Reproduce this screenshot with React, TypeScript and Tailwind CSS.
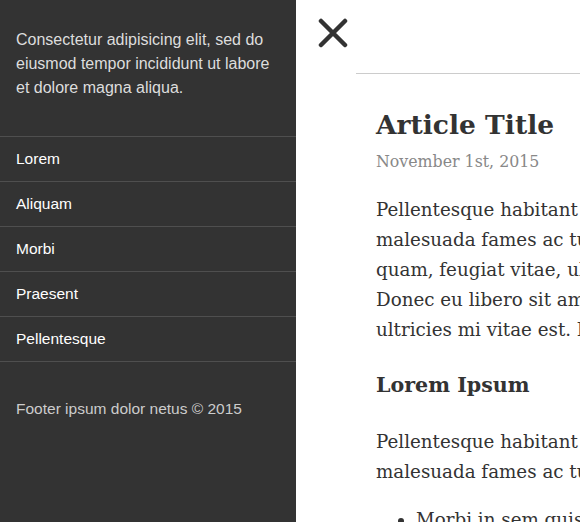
import React from 'react';

const navItems = ['Lorem', 'Aliquam', 'Morbi', 'Praesent', 'Pellentesque'];

const sans = "font-['Helvetica_Neue','Liberation_Sans',Arial,sans-serif]";
const serif = "font-['DejaVu_Serif','Liberation_Serif',serif]";

function CloseIcon() {
  return (
    <svg width="30" height="30" viewBox="0 0 30 30" className="text-[#333]">
      <path d="M3 3 L27 27 M27 3 L3 27" stroke="currentColor" strokeWidth="4.5" strokeLinecap="round" />
    </svg>
  );
}

export default function App() {
  return (
    <div className="flex h-[522px] w-[580px] overflow-hidden bg-white">
      {/* Sidebar */}
      <aside className={`${sans} flex w-[296px] shrink-0 flex-col bg-[#333333] text-[15.5px]`}>
        <p className="px-4 pt-[28px] pb-[36px] text-[16px] leading-6 text-[#dddddd]">
          Consectetur adipisicing elit, sed do eiusmod tempor incididunt ut labore et dolore magna aliqua.
        </p>
        <nav className="border-t border-[#4f4f4f]">
          {navItems.map((item) => (
            <div key={item} className="flex h-[45px] items-center border-b border-[#4f4f4f] px-4 text-white">
              {item}
            </div>
          ))}
        </nav>
        <p className="px-4 pt-[35px] leading-6 text-[#cccccc]">Footer ipsum dolor netus © 2015</p>
      </aside>

      {/* Main */}
      <main className="flex min-w-0 flex-1 flex-col">
        <div className="flex h-[73px] shrink-0 items-start pl-[22px] pt-[18px]">
          <CloseIcon />
        </div>
        <div className="ml-[60px] border-t border-[#cccccc]">
          <article className={`${serif} whitespace-nowrap pl-5 pt-[33px] text-[#333333]`}>
            <h1 className="text-[26.5px] font-bold leading-[36px]">Article Title</h1>
            <p className="mt-[7px] text-[15.8px] leading-6 text-[#888888]">November 1st, 2015</p>
            <div className="mt-[21px] text-[18.3px] leading-[30px]">
              <p>Pellentesque habitant morbi tristique senectus et</p>
              <p>malesuada fames ac turpis egestas. Vestibulum tortor</p>
              <p>quam, feugiat vitae, ultricies eget, tempor sit amet, ante.</p>
              <p>Donec eu libero sit amet quam egestas semper. Aenean</p>
              <p>ultricies mi vitae est. Mauris placerat eleifend leo.</p>
            </div>
            <h2 className="mt-[25px] text-[20.6px] font-bold leading-[30px]">Lorem Ipsum</h2>
            <div className="mt-[27px] text-[18.3px] leading-[30px]">
              <p>Pellentesque habitant morbi tristique senectus et</p>
              <p>malesuada fames ac turpis egestas.</p>
            </div>
            <ul className="mt-[18px] list-disc pl-[40px] text-[18.3px] leading-[30px]">
              <li>Morbi in sem quis dui placerat ornare.</li>
            </ul>
          </article>
        </div>
      </main>
    </div>
  );
}
